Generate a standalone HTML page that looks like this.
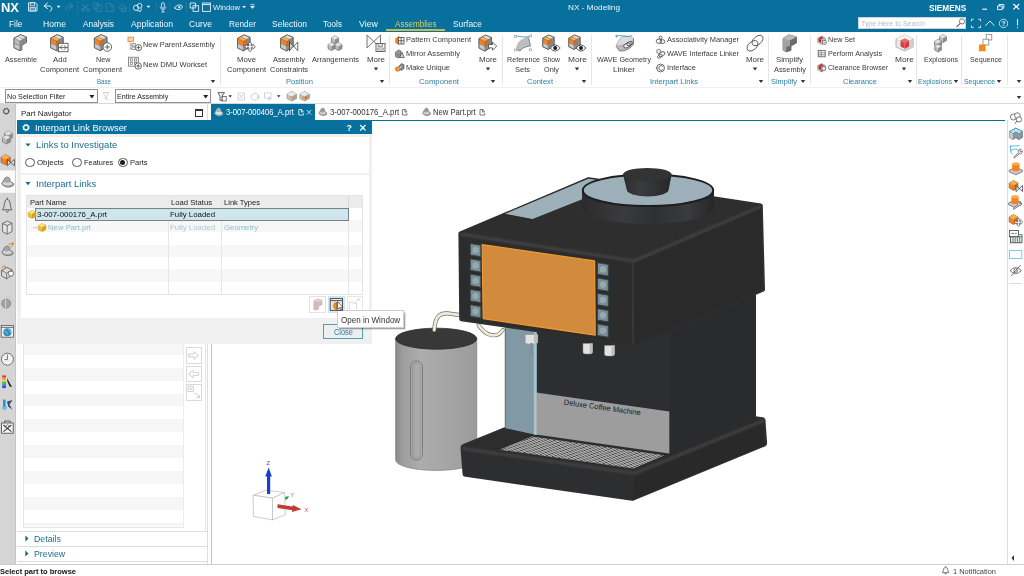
<!DOCTYPE html>
<html lang="en"><head><meta charset="utf-8"><title>NX - Modeling</title>
<style>
html,body{margin:0;padding:0;}
body{width:1024px;height:576px;overflow:hidden;position:relative;background:#fff;font-family:"Liberation Sans", sans-serif;}
.b{position:absolute;}
.t{position:absolute;white-space:nowrap;line-height:1;transform-origin:0 50%;}
svg{position:absolute;left:0;top:0;overflow:visible;}
</style></head><body>
<div class="b" style="left:0px;top:0px;width:1024px;height:32px;background:#08709d;"></div>
<div class="b" style="left:0px;top:87px;width:1024px;height:1px;background:#f0f0f0;"></div>
<div class="b" style="left:0px;top:103px;width:1024px;height:1px;background:#d9d9d9;"></div>
<div class="b" style="left:386px;top:29px;width:59px;height:2px;background:#c9bb52;"></div>
<div class="b" style="left:858px;top:17px;width:108px;height:12px;background:#fff;border:1px solid #c9d6dd;box-sizing:border-box;"></div>
<div class="b" style="left:220px;top:35px;width:1px;height:50px;background:#e6e6e6;"></div>
<div class="b" style="left:389px;top:35px;width:1px;height:50px;background:#e6e6e6;"></div>
<div class="b" style="left:502px;top:35px;width:1px;height:50px;background:#e6e6e6;"></div>
<div class="b" style="left:591px;top:35px;width:1px;height:50px;background:#e6e6e6;"></div>
<div class="b" style="left:768px;top:35px;width:1px;height:50px;background:#e6e6e6;"></div>
<div class="b" style="left:810px;top:35px;width:1px;height:50px;background:#e6e6e6;"></div>
<div class="b" style="left:916px;top:35px;width:1px;height:50px;background:#e6e6e6;"></div>
<div class="b" style="left:961px;top:35px;width:1px;height:50px;background:#e6e6e6;"></div>
<div class="b" style="left:1006.5px;top:35px;width:1px;height:50px;background:#e6e6e6;"></div>
<div class="b" style="left:5px;top:89px;width:92.5px;height:13.5px;background:#fff;border:1px solid #8f8f8f;box-sizing:border-box;"></div>
<div class="b" style="left:115.4px;top:89px;width:96px;height:13.5px;background:#fff;border:1px solid #8f8f8f;box-sizing:border-box;"></div>
<div class="b" style="left:0px;top:104px;width:15.2px;height:461px;background:#d5d5d5;"></div>
<div class="b" style="left:15.2px;top:104px;width:0.8px;height:461px;background:#c6c6c6;"></div>
<div class="b" style="left:18px;top:104px;width:190px;height:461px;background:#fff;"></div>
<div class="b" style="left:207.4px;top:104px;width:1px;height:461px;background:#dedede;"></div>
<div class="b" style="left:211px;top:120px;width:1px;height:445px;background:#c4c4c4;"></div>
<div class="b" style="left:195px;top:109px;width:8px;height:8px;border:1px solid #333;box-sizing:border-box;border-top-width:2px;"></div>
<div class="b" style="left:211.3px;top:104.3px;width:104.2px;height:16px;background:#08709d;"></div>
<div class="b" style="left:211.3px;top:119.6px;width:794px;height:1.2px;background:#08709d;"></div>
<div class="b" style="left:22.6px;top:343px;width:1px;height:185px;background:#e6e6e6;"></div>
<div class="b" style="left:183.2px;top:343px;width:1px;height:185px;background:#ececec;"></div>
<div class="b" style="left:23.6px;top:341.9px;width:159.6px;height:12.9px;background:#f6f6f6;"></div>
<div class="b" style="left:23.6px;top:367.7px;width:159.6px;height:12.9px;background:#f6f6f6;"></div>
<div class="b" style="left:23.6px;top:393.5px;width:159.6px;height:12.9px;background:#f6f6f6;"></div>
<div class="b" style="left:23.6px;top:419.3px;width:159.6px;height:12.9px;background:#f6f6f6;"></div>
<div class="b" style="left:23.6px;top:445.1px;width:159.6px;height:12.9px;background:#f6f6f6;"></div>
<div class="b" style="left:23.6px;top:470.90000000000003px;width:159.6px;height:12.9px;background:#f6f6f6;"></div>
<div class="b" style="left:23.6px;top:496.70000000000005px;width:159.6px;height:12.9px;background:#f6f6f6;"></div>
<div class="b" style="left:23.6px;top:522.5px;width:159.6px;height:3.8999999999999773px;background:#f6f6f6;"></div>
<div class="b" style="left:22.6px;top:527px;width:161.6px;height:1px;background:#e6e6e6;"></div>
<div class="b" style="left:185.6px;top:347px;width:16px;height:16.8px;background:#fff;border:1px solid #dadada;box-sizing:border-box;"></div>
<div class="b" style="left:185.6px;top:365.6px;width:16px;height:16.8px;background:#fff;border:1px solid #dadada;box-sizing:border-box;"></div>
<div class="b" style="left:185.6px;top:383.8px;width:16px;height:16.8px;background:#fff;border:1px solid #dadada;box-sizing:border-box;"></div>
<div class="b" style="left:205.4px;top:343px;width:1px;height:188px;background:#e6e6e6;"></div>
<div class="b" style="left:17.4px;top:530.6px;width:190px;height:1px;background:#dcdcdc;"></div>
<div class="b" style="left:17.4px;top:545.6px;width:190px;height:1px;background:#dcdcdc;"></div>
<div class="b" style="left:17.4px;top:560.6px;width:190px;height:1px;background:#dcdcdc;"></div>
<div class="b" style="left:0px;top:564.4px;width:1024px;height:1px;background:#cfcfcf;"></div>
<div class="b" style="left:0px;top:565.4px;width:1024px;height:11px;background:#fff;"></div>
<div class="b" style="left:1006.6px;top:120px;width:1px;height:445px;background:#dcdcdc;"></div>
<div class="b" style="left:1009px;top:283px;width:13px;height:1px;background:#dddddd;"></div>
<div class="b" style="left:17.4px;top:120px;width:354.20000000000005px;height:224.4px;background:#f0f0f0;"></div>
<div class="b" style="left:17.4px;top:120px;width:354.20000000000005px;height:14.4px;background:#08709d;"></div>
<div class="b" style="left:20.6px;top:136.5px;width:348.6px;height:36.2px;background:#fff;"></div>
<div class="b" style="left:20.6px;top:174.8px;width:348.6px;height:143.4px;background:#fff;"></div>
<div class="b" style="left:25.099999999999998px;top:157.5px;width:9.6px;height:9.6px;background:#fff;border:1px solid #555;box-sizing:border-box;border-radius:50%;"></div>
<div class="b" style="left:72.0px;top:157.5px;width:9.6px;height:9.6px;background:#fff;border:1px solid #555;box-sizing:border-box;border-radius:50%;"></div>
<div class="b" style="left:118.0px;top:157.5px;width:9.6px;height:9.6px;background:#fff;border:1px solid #555;box-sizing:border-box;border-radius:50%;"></div>
<div class="b" style="left:120.2px;top:159.7px;width:5.2px;height:5.2px;background:#1e1e1e;border-radius:50%;"></div>
<div class="b" style="left:26px;top:194.8px;width:337.2px;height:100.4px;background:#fff;border:1px solid #e4e4e4;box-sizing:border-box;"></div>
<div class="b" style="left:27px;top:195.8px;width:335.2px;height:12px;background:#ececec;"></div>
<div class="b" style="left:27px;top:220.10000000000002px;width:335.2px;height:12.3px;background:#f7f7f7;"></div>
<div class="b" style="left:27px;top:244.70000000000002px;width:335.2px;height:12.3px;background:#f7f7f7;"></div>
<div class="b" style="left:27px;top:269.3px;width:335.2px;height:12.3px;background:#f7f7f7;"></div>
<div class="b" style="left:167.6px;top:195.8px;width:1px;height:98px;background:#e6e6e6;"></div>
<div class="b" style="left:220.6px;top:195.8px;width:1px;height:98px;background:#e6e6e6;"></div>
<div class="b" style="left:348.2px;top:195.8px;width:1px;height:98px;background:#e6e6e6;"></div>
<div class="b" style="left:348.2px;top:195.8px;width:1px;height:12px;background:#d8d8d8;"></div>
<div class="b" style="left:35.4px;top:207.8px;width:313.4px;height:13.2px;background:#cfe5ee;border:1px solid #75847c;box-sizing:border-box;"></div>
<div class="b" style="left:309.4px;top:296px;width:17px;height:16.6px;background:#fff;border:1px solid #e2e2e2;box-sizing:border-box;"></div>
<div class="b" style="left:328px;top:296px;width:16.6px;height:16.6px;background:#d6edf1;border:1px solid #cfe6ec;box-sizing:border-box;"></div>
<div class="b" style="left:346.9px;top:296px;width:16px;height:16.6px;background:#fff;border:1px solid #e6e6e6;box-sizing:border-box;"></div>
<div class="b" style="left:323.4px;top:324.4px;width:39.4px;height:14.4px;background:#efefef;border:1px solid #4f9fc0;box-sizing:border-box;"></div>
<div class="b" style="left:337px;top:310px;width:67.4px;height:18.4px;background:#fff;border:1px solid #cfcfcf;box-sizing:border-box;box-shadow:1.5px 1.5px 1.5px rgba(0,0,0,.35);"></div>
<svg width="1024" height="576"><path d="M210.8,79.9 L215.2,79.9 L213,82.98 Z" fill="#333"/></svg>
<svg width="1024" height="576"><path d="M379.8,79.9 L384.2,79.9 L382,82.98 Z" fill="#333"/></svg>
<svg width="1024" height="576"><path d="M490.8,79.9 L495.2,79.9 L493,82.98 Z" fill="#333"/></svg>
<svg width="1024" height="576"><path d="M581.8,79.9 L586.2,79.9 L584,82.98 Z" fill="#333"/></svg>
<svg width="1024" height="576"><path d="M758.8,79.9 L763.2,79.9 L761,82.98 Z" fill="#333"/></svg>
<svg width="1024" height="576"><path d="M800.8,79.9 L805.2,79.9 L803,82.98 Z" fill="#333"/></svg>
<svg width="1024" height="576"><path d="M907.8,79.9 L912.2,79.9 L910,82.98 Z" fill="#333"/></svg>
<svg width="1024" height="576"><path d="M953.8,79.9 L958.2,79.9 L956,82.98 Z" fill="#333"/></svg>
<svg width="1024" height="576"><path d="M996.8,79.9 L1001.2,79.9 L999,82.98 Z" fill="#333"/></svg>
<svg width="1024" height="576"><path d="M1016.8,79.9 L1021.2,79.9 L1019,82.98 Z" fill="#333"/></svg>
<svg width="1024" height="576"><path d="M373.8,67.4 L378.2,67.4 L376,70.48 Z" fill="#333"/></svg>
<svg width="1024" height="576"><path d="M485.8,67.4 L490.2,67.4 L488,70.48 Z" fill="#333"/></svg>
<svg width="1024" height="576"><path d="M574.8,67.4 L579.2,67.4 L577,70.48 Z" fill="#333"/></svg>
<svg width="1024" height="576"><path d="M752.8,67.4 L757.2,67.4 L755,70.48 Z" fill="#333"/></svg>
<svg width="1024" height="576"><path d="M901.8,67.4 L906.2,67.4 L904,70.48 Z" fill="#333"/></svg>
<svg width="1024" height="576"><path d="M1016.8,95.9 L1021.2,95.9 L1019,98.98 Z" fill="#333"/></svg>
<svg width="1024" height="576"><path d="M89.4,94.95 L94.4,94.95 L91.9,98.45 Z" fill="#222"/></svg>
<svg width="1024" height="576"><path d="M203.2,94.95 L208.2,94.95 L205.7,98.45 Z" fill="#222"/></svg>
<svg width="1024" height="576"><g fill="none" stroke="#c4c4c4" stroke-width="0.8" stroke-linejoin="round"><path d="M188.6,354 H194 V351.6 L198.6,355.4 L194,359.2 V356.8 H188.6 Z"/><path d="M198.6,372.6 H193.2 V370.2 L188.6,374 L193.2,377.8 V375.4 H198.6 Z"/><rect x="188" y="386.2" width="5.4" height="5.4"/><path d="M189.4,388.9 H192 M190.7,387.6 V390.2 M194.4,392.6 L199.4,397.6 M199.4,394.6 V397.6 H196.4"/></g></svg>
<svg width="1024" height="576"><path d="M25.3,535.6 L28.6,538.6 L25.3,541.6 Z M25.3,550.6 L28.6,553.6 L25.3,556.6 Z" fill="#1f6d92"/></svg>
<svg width="1024" height="576"><path d="M1014,555 L1011.5,558 L1014,561 Z" fill="#333"/></svg>
<svg width="1024" height="576"><path d="M942.4,572.6 C943.8,571 943,567.6 945.6,567 C948.2,567.6 947.4,571 948.8,572.6 Z M944.6,573.2 C944.8,574.4 946.4,574.4 946.6,573.2 M945.6,566.2 V567" fill="none" stroke="#444" stroke-width="0.7" stroke-linejoin="round"/></svg>
<svg width="1024" height="576"><path d="M25.3,143.4 L30.7,143.4 L28,146.6 Z M25.3,182 L30.7,182 L28,185.2 Z" fill="#1f6d92"/><circle cx="26" cy="127.6" r="2.4" fill="none" stroke="#fff" stroke-width="1.3"/><circle cx="26" cy="127.6" r="3.3" fill="none" stroke="#fff" stroke-width="0.9" stroke-dasharray="1.1 1.49"/><path d="M360.2,125 L365.5,130.5 M365.5,125 L360.2,130.5" stroke="#fff" stroke-width="1.1"/></svg>
<svg width="1024" height="576" viewBox="0 0 1024 576"><polygon points="14.00,38.20 20.50,34.70 26.50,37.20 26.50,46.20 20.00,50.70 14.00,47.70" fill="#bdbdbd" stroke="#5a5a5a" stroke-width="0.8" stroke-linejoin="round"/><polygon points="14.00,38.20 20.50,34.70 26.50,37.20 20.00,41.20" fill="#e2e2e2"/><polygon points="20.00,41.20 26.50,37.20 26.50,46.20 20.00,50.70" fill="#8e8e8e"/><polygon points="14.00,38.20 20.00,41.20 20.00,50.70 14.00,47.70" fill="#c9c9c9"/><polygon points="14.00,38.20 17.40,36.40 23.40,39.20 20.00,41.20" fill="#e2e2e2"/><polygon points="14.00,38.20 20.00,41.20 20.00,46.00 14.00,43.10" fill="#bdbdbd"/><polygon points="20.00,41.20 23.40,39.20 23.40,43.90 20.00,46.00" fill="#8e8e8e"/><polyline points="14.00,38.20 20.00,41.20 26.50,37.20" fill="none" stroke="#5f5f5f" stroke-width="0.5" stroke-linejoin="round"/><polyline points="20.00,41.20 20.00,50.70" fill="none" stroke="#5f5f5f" stroke-width="0.5" stroke-linejoin="round"/><polyline points="14.00,43.10 20.00,46.00 26.50,41.80" fill="none" stroke="#777" stroke-width="0.45" stroke-linejoin="round"/><polyline points="17.40,36.40 23.40,39.20 23.40,48.30" fill="none" stroke="#777" stroke-width="0.45" stroke-linejoin="round"/><polyline points="14.00,38.20 20.50,34.70 26.50,37.20 26.50,46.20 20.00,50.70 14.00,47.70 14.00,38.20" fill="none" stroke="#5a5a5a" stroke-width="0.8" stroke-linejoin="round"/><polygon points="22,45.5 27.2,42.3 27.2,47.5 22,51.2" fill="#fff"/><path d="M22,45.3 L26.6,42.5 M22,45.3 L22,50.3" stroke="#6f6f6f" stroke-width="0.7"/><path d="M14,42.9 L20,45.9 L26.5,42" stroke="#8a8a8a" stroke-width="0.5" fill="none"/><polygon points="50.60,38.20 57.10,34.70 63.10,37.20 63.10,46.20 56.60,50.70 50.60,47.70" fill="#bdbdbd" stroke="#5a5a5a" stroke-width="0.8" stroke-linejoin="round"/><polygon points="50.60,38.20 57.10,34.70 63.10,37.20 56.60,41.20" fill="#e2e2e2"/><polygon points="56.60,41.20 63.10,37.20 63.10,46.20 56.60,50.70" fill="#8e8e8e"/><polygon points="50.60,38.20 56.60,41.20 56.60,50.70 50.60,47.70" fill="#c9c9c9"/><polygon points="50.60,38.20 54.00,36.40 60.00,39.20 56.60,41.20" fill="#fbad52"/><polygon points="50.60,38.20 56.60,41.20 56.60,46.00 50.60,43.10" fill="#f58220"/><polygon points="56.60,41.20 60.00,39.20 60.00,43.90 56.60,46.00" fill="#df6f12"/><polyline points="50.60,38.20 56.60,41.20 63.10,37.20" fill="none" stroke="#5f5f5f" stroke-width="0.5" stroke-linejoin="round"/><polyline points="56.60,41.20 56.60,50.70" fill="none" stroke="#5f5f5f" stroke-width="0.5" stroke-linejoin="round"/><polyline points="50.60,43.10 56.60,46.00 63.10,41.80" fill="none" stroke="#777" stroke-width="0.45" stroke-linejoin="round"/><polyline points="54.00,36.40 60.00,39.20 60.00,48.30" fill="none" stroke="#777" stroke-width="0.45" stroke-linejoin="round"/><polyline points="50.60,38.20 57.10,34.70 63.10,37.20 63.10,46.20 56.60,50.70 50.60,47.70 50.60,38.20" fill="none" stroke="#5a5a5a" stroke-width="0.8" stroke-linejoin="round"/><rect x="58.4" y="43.3" width="9.6" height="8.4" fill="#fff" stroke="#555" stroke-width="0.9"/><path d="M58.4,47.5 H68 M62.5,45.2 L60,47.5 L62.5,49.8 M63.8,45.2 L66.3,47.5 L63.8,49.8" stroke="#555" stroke-width="0.8" fill="none"/><polygon points="94.40,38.20 100.90,34.70 106.90,37.20 106.90,46.20 100.40,50.70 94.40,47.70" fill="#bdbdbd" stroke="#5a5a5a" stroke-width="0.8" stroke-linejoin="round"/><polygon points="94.40,38.20 100.90,34.70 106.90,37.20 100.40,41.20" fill="#e2e2e2"/><polygon points="100.40,41.20 106.90,37.20 106.90,46.20 100.40,50.70" fill="#8e8e8e"/><polygon points="94.40,38.20 100.40,41.20 100.40,50.70 94.40,47.70" fill="#c9c9c9"/><polygon points="94.40,38.20 97.80,36.40 103.80,39.20 100.40,41.20" fill="#fbad52"/><polygon points="94.40,38.20 100.40,41.20 100.40,46.00 94.40,43.10" fill="#f58220"/><polygon points="100.40,41.20 103.80,39.20 103.80,43.90 100.40,46.00" fill="#df6f12"/><polyline points="94.40,38.20 100.40,41.20 106.90,37.20" fill="none" stroke="#5f5f5f" stroke-width="0.5" stroke-linejoin="round"/><polyline points="100.40,41.20 100.40,50.70" fill="none" stroke="#5f5f5f" stroke-width="0.5" stroke-linejoin="round"/><polyline points="94.40,43.10 100.40,46.00 106.90,41.80" fill="none" stroke="#777" stroke-width="0.45" stroke-linejoin="round"/><polyline points="97.80,36.40 103.80,39.20 103.80,48.30" fill="none" stroke="#777" stroke-width="0.45" stroke-linejoin="round"/><polyline points="94.40,38.20 100.90,34.70 106.90,37.20 106.90,46.20 100.40,50.70 94.40,47.70 94.40,38.20" fill="none" stroke="#5a5a5a" stroke-width="0.8" stroke-linejoin="round"/><circle cx="107.3" cy="47" r="4.3" fill="#fff" stroke="#444" stroke-width="0.8"/><path d="M104.72,47 H109.88 M107.3,44.42 V49.58" stroke="#444" stroke-width="0.8" fill="none"/><rect x="128" y="37.2" width="5.5" height="4.2" fill="#fbd3b0" stroke="#ee8a3c" stroke-width="0.9"/><path d="M130.2,41.5 V50 M130.2,45 H134 M130.2,48.5 H134" stroke="#9a9a9a" stroke-width="0.7" fill="none"/><rect x="132" y="43.4" width="3.2" height="2.6" fill="#fff" stroke="#555" stroke-width="0.6"/><rect x="132" y="47" width="3.2" height="2.6" fill="#fff" stroke="#555" stroke-width="0.6"/><circle cx="138.5" cy="47.6" r="3.1" fill="#fff" stroke="#444" stroke-width="0.8"/><path d="M136.64,47.6 H140.36 M138.5,45.74 V49.46" stroke="#444" stroke-width="0.8" fill="none"/><rect x="128.5" y="57.2" width="10" height="9" fill="#f6f6f6" stroke="#777" stroke-width="0.8"/><rect x="130.2" y="58.8" width="2.4" height="2.2" fill="#fff" stroke="#666" stroke-width="0.6"/><rect x="134.4" y="58.8" width="2.4" height="2.2" fill="#fff" stroke="#666" stroke-width="0.6"/><rect x="130.2" y="62.4" width="2.4" height="2.2" fill="#fff" stroke="#666" stroke-width="0.6"/><rect x="134.4" y="62.4" width="2.4" height="2.2" fill="#fff" stroke="#666" stroke-width="0.6"/><circle cx="138.2" cy="66" r="3.2" fill="#fff" stroke="#444" stroke-width="0.8"/><path d="M136.28,66 H140.12 M138.2,64.08 V67.92" stroke="#444" stroke-width="0.8" fill="none"/><polygon points="237.50,38.40 244.00,34.90 250.00,37.40 250.00,46.40 243.50,50.90 237.50,47.90" fill="#bdbdbd" stroke="#5a5a5a" stroke-width="0.8" stroke-linejoin="round"/><polygon points="237.50,38.40 244.00,34.90 250.00,37.40 243.50,41.40" fill="#e2e2e2"/><polygon points="243.50,41.40 250.00,37.40 250.00,46.40 243.50,50.90" fill="#8e8e8e"/><polygon points="237.50,38.40 243.50,41.40 243.50,50.90 237.50,47.90" fill="#c9c9c9"/><polygon points="237.50,38.40 240.90,36.60 246.90,39.40 243.50,41.40" fill="#fbad52"/><polygon points="237.50,38.40 243.50,41.40 243.50,46.20 237.50,43.30" fill="#f58220"/><polygon points="243.50,41.40 246.90,39.40 246.90,44.10 243.50,46.20" fill="#df6f12"/><polyline points="237.50,38.40 243.50,41.40 250.00,37.40" fill="none" stroke="#5f5f5f" stroke-width="0.5" stroke-linejoin="round"/><polyline points="243.50,41.40 243.50,50.90" fill="none" stroke="#5f5f5f" stroke-width="0.5" stroke-linejoin="round"/><polyline points="237.50,43.30 243.50,46.20 250.00,42.00" fill="none" stroke="#777" stroke-width="0.45" stroke-linejoin="round"/><polyline points="240.90,36.60 246.90,39.40 246.90,48.50" fill="none" stroke="#777" stroke-width="0.45" stroke-linejoin="round"/><polyline points="237.50,38.40 244.00,34.90 250.00,37.40 250.00,46.40 243.50,50.90 237.50,47.90 237.50,38.40" fill="none" stroke="#5a5a5a" stroke-width="0.8" stroke-linejoin="round"/><path d="M250,41.8 L252.2,44.4 H251 V45.7 H253 V44.5 L255.4,46.7 L253,48.9 V47.7 H251 V49.2 H252.2 L250,51.8 L247.8,49.2 H249 V47.7 H247 V48.9 L244.6,46.7 L247,44.5 V45.7 H249 V44.4 H247.8 Z" fill="#fff" stroke="#444" stroke-width="0.7" stroke-linejoin="round"/><polygon points="280.60,38.40 287.10,34.90 293.10,37.40 293.10,46.40 286.60,50.90 280.60,47.90" fill="#bdbdbd" stroke="#5a5a5a" stroke-width="0.8" stroke-linejoin="round"/><polygon points="280.60,38.40 287.10,34.90 293.10,37.40 286.60,41.40" fill="#e2e2e2"/><polygon points="286.60,41.40 293.10,37.40 293.10,46.40 286.60,50.90" fill="#8e8e8e"/><polygon points="280.60,38.40 286.60,41.40 286.60,50.90 280.60,47.90" fill="#c9c9c9"/><polygon points="280.60,38.40 284.00,36.60 290.00,39.40 286.60,41.40" fill="#fbad52"/><polygon points="280.60,38.40 286.60,41.40 286.60,46.20 280.60,43.30" fill="#f58220"/><polygon points="286.60,41.40 290.00,39.40 290.00,44.10 286.60,46.20" fill="#df6f12"/><polyline points="280.60,38.40 286.60,41.40 293.10,37.40" fill="none" stroke="#5f5f5f" stroke-width="0.5" stroke-linejoin="round"/><polyline points="286.60,41.40 286.60,50.90" fill="none" stroke="#5f5f5f" stroke-width="0.5" stroke-linejoin="round"/><polyline points="280.60,43.30 286.60,46.20 293.10,42.00" fill="none" stroke="#777" stroke-width="0.45" stroke-linejoin="round"/><polyline points="284.00,36.60 290.00,39.40 290.00,48.50" fill="none" stroke="#777" stroke-width="0.45" stroke-linejoin="round"/><polyline points="280.60,38.40 287.10,34.90 293.10,37.40 293.10,46.40 286.60,50.90 280.60,47.90 280.60,38.40" fill="none" stroke="#5a5a5a" stroke-width="0.8" stroke-linejoin="round"/><path d="M289.5,42 L297.8,50.6 L297.8,42 L289.5,50.6 Z" fill="#f4f4f4" fill-opacity="0.6" stroke="#444" stroke-width="0.8" stroke-linejoin="round"/><path d="M289.5,41 V51.5" stroke="#444" stroke-width="0.8"/><polygon points="331.5,37.8 335.0,35.8 338.5,37.8 338.5,41.8 335.0,43.8 331.5,41.8" fill="#bdbdbd" stroke="#676767" stroke-width="0.7" stroke-linejoin="round"/><polygon points="331.5,37.8 335.0,35.8 338.5,37.8 335.0,39.8" fill="#e2e2e2"/><polygon points="335.0,39.8 338.5,37.8 338.5,41.8 335.0,43.8" fill="#8e8e8e"/><polygon points="328,44.6 331.5,42.6 335.0,44.6 335.0,48.6 331.5,50.6 328,48.6" fill="#bdbdbd" stroke="#676767" stroke-width="0.7" stroke-linejoin="round"/><polygon points="328,44.6 331.5,42.6 335.0,44.6 331.5,46.6" fill="#e2e2e2"/><polygon points="331.5,46.6 335.0,44.6 335.0,48.6 331.5,50.6" fill="#8e8e8e"/><polygon points="335,44.6 338.5,42.6 342.0,44.6 342.0,48.6 338.5,50.6 335,48.6" fill="#bdbdbd" stroke="#676767" stroke-width="0.7" stroke-linejoin="round"/><polygon points="335,44.6 338.5,42.6 342.0,44.6 338.5,46.6" fill="#e2e2e2"/><polygon points="338.5,46.6 342.0,44.6 342.0,48.6 338.5,50.6" fill="#8e8e8e"/><path d="M367,35 L380.5,48 L380.5,35 L367,48 Z" fill="#f4f4f4" fill-opacity="0.6" stroke="#666" stroke-width="0.9" stroke-linejoin="round"/><rect x="376" y="43.5" width="9" height="8" fill="#fff" stroke="#555" stroke-width="0.9"/><rect x="378" y="43.7" width="4.6" height="2.6" fill="#ddd" stroke="#555" stroke-width="0.6"/><rect x="377.8" y="48" width="5.4" height="2" fill="#fff" stroke="#555" stroke-width="0.6"/><polygon points="479.00,38.60 485.50,35.10 491.50,37.60 491.50,46.60 485.00,51.10 479.00,48.10" fill="#bdbdbd" stroke="#5a5a5a" stroke-width="0.8" stroke-linejoin="round"/><polygon points="479.00,38.60 485.50,35.10 491.50,37.60 485.00,41.60" fill="#e2e2e2"/><polygon points="485.00,41.60 491.50,37.60 491.50,46.60 485.00,51.10" fill="#8e8e8e"/><polygon points="479.00,38.60 485.00,41.60 485.00,51.10 479.00,48.10" fill="#c9c9c9"/><polygon points="479.00,38.60 482.40,36.80 488.40,39.60 485.00,41.60" fill="#fbad52"/><polygon points="479.00,38.60 485.00,41.60 485.00,46.40 479.00,43.50" fill="#f58220"/><polygon points="485.00,41.60 488.40,39.60 488.40,44.30 485.00,46.40" fill="#df6f12"/><polyline points="479.00,38.60 485.00,41.60 491.50,37.60" fill="none" stroke="#5f5f5f" stroke-width="0.5" stroke-linejoin="round"/><polyline points="485.00,41.60 485.00,51.10" fill="none" stroke="#5f5f5f" stroke-width="0.5" stroke-linejoin="round"/><polyline points="479.00,43.50 485.00,46.40 491.50,42.20" fill="none" stroke="#777" stroke-width="0.45" stroke-linejoin="round"/><polyline points="482.40,36.80 488.40,39.60 488.40,48.70" fill="none" stroke="#777" stroke-width="0.45" stroke-linejoin="round"/><polyline points="479.00,38.60 485.50,35.10 491.50,37.60 491.50,46.60 485.00,51.10 479.00,48.10 479.00,38.60" fill="none" stroke="#5a5a5a" stroke-width="0.8" stroke-linejoin="round"/><path d="M488.5,44.5 H492.5 V42.2 L496.8,46.2 L492.5,50.2 V47.9 H488.5 Z" fill="#fff" stroke="#444" stroke-width="0.8" stroke-linejoin="round"/><path d="M516.5,49.5 C517,43 521,38.5 528.5,37.5 L530.5,46 C525,46.5 521.5,48.5 520,51 Z" fill="#bdbdbd" stroke="#6a6a6a" stroke-width="0.8" stroke-linejoin="round"/><path d="M516.5,49.5 C517,43 521,38.5 528.5,37.5" fill="none" stroke="#e8e8e8" stroke-width="0.8"/><path d="M514.5,37 C519,34 524,40 531.5,35" fill="none" stroke="#3aa0d0" stroke-width="0.9"/><rect x="514.2" y="35.4" width="2" height="2" fill="#fff" stroke="#888" stroke-width="0.5"/><rect x="529.8" y="35" width="2" height="2" fill="#fff" stroke="#888" stroke-width="0.5"/><rect x="514.6" y="49" width="2" height="2" fill="#fff" stroke="#888" stroke-width="0.5"/><rect x="529.6" y="48.8" width="2" height="2" fill="#fff" stroke="#888" stroke-width="0.5"/><polygon points="542.80,38.20 548.65,35.05 554.05,37.30 554.05,45.40 548.20,49.45 542.80,46.75" fill="#bdbdbd" stroke="#5a5a5a" stroke-width="0.8" stroke-linejoin="round"/><polygon points="542.80,38.20 548.65,35.05 554.05,37.30 548.20,40.90" fill="#e2e2e2"/><polygon points="548.20,40.90 554.05,37.30 554.05,45.40 548.20,49.45" fill="#8e8e8e"/><polygon points="542.80,38.20 548.20,40.90 548.20,49.45 542.80,46.75" fill="#c9c9c9"/><polygon points="542.80,38.20 545.86,36.58 551.26,39.10 548.20,40.90" fill="#fbad52"/><polygon points="542.80,38.20 548.20,40.90 548.20,45.22 542.80,42.61" fill="#f58220"/><polygon points="548.20,40.90 551.26,39.10 551.26,43.33 548.20,45.22" fill="#df6f12"/><polyline points="542.80,38.20 548.20,40.90 554.05,37.30" fill="none" stroke="#5f5f5f" stroke-width="0.5" stroke-linejoin="round"/><polyline points="548.20,40.90 548.20,49.45" fill="none" stroke="#5f5f5f" stroke-width="0.5" stroke-linejoin="round"/><polyline points="542.80,42.61 548.20,45.22 554.05,41.44" fill="none" stroke="#777" stroke-width="0.45" stroke-linejoin="round"/><polyline points="545.86,36.58 551.26,39.10 551.26,47.29" fill="none" stroke="#777" stroke-width="0.45" stroke-linejoin="round"/><polyline points="542.80,38.20 548.65,35.05 554.05,37.30 554.05,45.40 548.20,49.45 542.80,46.75 542.80,38.20" fill="none" stroke="#5a5a5a" stroke-width="0.8" stroke-linejoin="round"/><path d="M550.2,48 Q555.2,41.8 560.2,48 Q555.2,54.2 550.2,48 Z" fill="#fff" stroke="#333" stroke-width="0.8"/><circle cx="555.2" cy="48" r="2.05" fill="#222"/><polygon points="568.80,38.20 574.65,35.05 580.05,37.30 580.05,45.40 574.20,49.45 568.80,46.75" fill="#bdbdbd" stroke="#5a5a5a" stroke-width="0.8" stroke-linejoin="round"/><polygon points="568.80,38.20 574.65,35.05 580.05,37.30 574.20,40.90" fill="#e2e2e2"/><polygon points="574.20,40.90 580.05,37.30 580.05,45.40 574.20,49.45" fill="#8e8e8e"/><polygon points="568.80,38.20 574.20,40.90 574.20,49.45 568.80,46.75" fill="#c9c9c9"/><polygon points="568.80,38.20 571.86,36.58 577.26,39.10 574.20,40.90" fill="#fbad52"/><polygon points="568.80,38.20 574.20,40.90 574.20,45.22 568.80,42.61" fill="#f58220"/><polygon points="574.20,40.90 577.26,39.10 577.26,43.33 574.20,45.22" fill="#df6f12"/><polyline points="568.80,38.20 574.20,40.90 580.05,37.30" fill="none" stroke="#5f5f5f" stroke-width="0.5" stroke-linejoin="round"/><polyline points="574.20,40.90 574.20,49.45" fill="none" stroke="#5f5f5f" stroke-width="0.5" stroke-linejoin="round"/><polyline points="568.80,42.61 574.20,45.22 580.05,41.44" fill="none" stroke="#777" stroke-width="0.45" stroke-linejoin="round"/><polyline points="571.86,36.58 577.26,39.10 577.26,47.29" fill="none" stroke="#777" stroke-width="0.45" stroke-linejoin="round"/><polyline points="568.80,38.20 574.65,35.05 580.05,37.30 580.05,45.40 574.20,49.45 568.80,46.75 568.80,38.20" fill="none" stroke="#5a5a5a" stroke-width="0.8" stroke-linejoin="round"/><path d="M576.0,48 Q581,41.8 586.0,48 Q581,54.2 576.0,48 Z" fill="#fff" stroke="#333" stroke-width="0.8"/><circle cx="581" cy="48" r="2.05" fill="#222"/><path d="M616,46 L621,37.5 C625,35.5 630,36 633.5,38.5 L633.5,44 C631,48.5 625,51.5 619.5,51 Z" fill="#b9b9b9" stroke="#666" stroke-width="0.8" stroke-linejoin="round"/><path d="M616,46 L621,37.5 C625,35.5 630,36 633.5,38.5 L628,44.5 C624,44 620,44.5 616,46 Z" fill="#dcdcdc"/><ellipse cx="627" cy="45.5" rx="3.6" ry="2.2" transform="rotate(-25 627 45.5)" fill="#eee" stroke="#444" stroke-width="0.8"/><ellipse cx="629.5" cy="43.6" rx="3" ry="1.9" transform="rotate(-25 629.5 43.6)" fill="none" stroke="#444" stroke-width="0.8"/><path d="M616,36.5 C621,33.5 626,38.5 632,35.5" fill="none" stroke="#3aa0d0" stroke-width="0.9"/><path d="M615,36.2 H618 M616.5,34.7 V37.7" stroke="#3aa0d0" stroke-width="0.7"/><ellipse cx="757.5" cy="40.5" rx="6.4" ry="4" transform="rotate(-42 757.5 40.5)" fill="#fff" stroke="#555" stroke-width="0.9"/><ellipse cx="752.5" cy="45.8" rx="6.4" ry="4" transform="rotate(-42 752.5 45.8)" fill="none" stroke="#555" stroke-width="0.9"/><polygon points="783,38.5 789,34.8 796.5,37 796.5,43 791,46 791,50.5 786,51.8 783,50" fill="#8a8a8a" stroke="#555" stroke-width="0.7" stroke-linejoin="round"/><polygon points="783,38.5 789,34.8 796.5,37 790,40.6" fill="#bcbcbc"/><polygon points="783,38.5 790,40.6 790,46 786.2,47 786.2,51.8 783,50" fill="#a3a3a3"/><polygon points="790,40.6 796.5,37 796.5,43 791,46 791,50.5 786.2,51.8 786.2,47 790,46" fill="#6c6c6c"/><polygon points="896,39 904.5,34.8 913.2,39 913.2,47 904.5,51 896,47" fill="#e9e9e9" stroke="#9a9a9a" stroke-width="0.7" stroke-linejoin="round"/><polygon points="896,39 904.5,34.8 913.2,39 904.5,43" fill="#f4f4f4"/><polygon points="904.5,43 913.2,39 913.2,47 904.5,51" fill="#cfcfcf"/><polygon points="900.5,40.5 904.8,38.5 909,40.5 909,46.5 904.8,48.8 900.5,46.5" fill="#e03a3a"/><polygon points="900.5,40.5 904.8,38.5 909,40.5 904.8,42.5" fill="#f26a6a"/><path d="M904.5,43 V51 M896,39 L904.5,43 L913.2,39" stroke="#bdbdbd" stroke-width="0.5" fill="none" opacity="0.8"/><polygon points="939.5,36.6 943.0,34.6 946.5,36.6 946.5,40.6 943.0,42.6 939.5,40.6" fill="#bdbdbd" stroke="#676767" stroke-width="0.7" stroke-linejoin="round"/><polygon points="939.5,36.6 943.0,34.6 946.5,36.6 943.0,38.6" fill="#e2e2e2"/><polygon points="943.0,38.6 946.5,36.6 946.5,40.6 943.0,42.6" fill="#8e8e8e"/><polygon points="934.5,41.4 938.0,39.4 941.5,41.4 941.5,45.4 938.0,47.4 934.5,45.4" fill="#bdbdbd" stroke="#676767" stroke-width="0.7" stroke-linejoin="round"/><polygon points="934.5,41.4 938.0,39.4 941.5,41.4 938.0,43.4" fill="#e2e2e2"/><polygon points="938.0,43.4 941.5,41.4 941.5,45.4 938.0,47.4" fill="#8e8e8e"/><polygon points="934.8,46.3 938.125,44.4 941.4499999999999,46.3 941.4499999999999,50.099999999999994 938.125,52.0 934.8,50.099999999999994" fill="#bdbdbd" stroke="#676767" stroke-width="0.7" stroke-linejoin="round"/><polygon points="934.8,46.3 938.125,44.4 941.4499999999999,46.3 938.125,48.199999999999996" fill="#e2e2e2"/><polygon points="938.125,48.199999999999996 941.4499999999999,46.3 941.4499999999999,50.099999999999994 938.125,52.0" fill="#8e8e8e"/><rect x="986.2" y="34.4" width="5.6" height="5.6" fill="#fff" stroke="#777" stroke-width="0.7"/><rect x="983" y="39.2" width="5.8" height="5.8" fill="#fff" stroke="#777" stroke-width="0.7"/><rect x="979" y="44.5" width="6.6" height="6.8" fill="#f28a1e"/></svg>
<svg width="1024" height="576" viewBox="0 0 1024 576"><path d="M28.5,2.8 H35.5 L37,4.3 V11 H28.5 Z" fill="none" stroke="#e6f0f5" stroke-width="0.9" stroke-linejoin="round"/><rect x="30.3" y="2.8" width="4.4" height="3" fill="none" stroke="#e6f0f5" stroke-width="0.8"/><rect x="30" y="7.6" width="5.4" height="3.4" fill="#5da3c2" stroke="#e6f0f5" stroke-width="0.7"/><path d="M47.5,3 L44,6 L47.5,8.6 M44.3,6 H49 C52.5,6 52.8,10.2 50,11.2" fill="none" stroke="#e6f0f5" stroke-width="1" stroke-linecap="round" stroke-linejoin="round"/><path d="M56.6,5.8 H60.6 L58.6,8 Z" fill="#e6f0f5"/><path d="M69.5,3 L73,6 L69.5,8.6 M72.7,6 H68.5 C65.3,6 65,10.2 67.5,11.2" fill="none" stroke="#3f87a8" stroke-width="1" stroke-linecap="round" stroke-linejoin="round"/><path d="M77.6,2 V12.5" stroke="#2f7a9d" stroke-width="0.7"/><path d="M129.7,2 V12.5" stroke="#2f7a9d" stroke-width="0.7"/><path d="M156,2 V12.5" stroke="#2f7a9d" stroke-width="0.7"/><path d="M170,2 V12.5" stroke="#2f7a9d" stroke-width="0.7"/><path d="M186.5,2 V12.5" stroke="#2f7a9d" stroke-width="0.7"/><path d="M82,9.5 L88.5,4.5 M82,4.5 L88.5,9.5" stroke="#3f87a8" stroke-width="0.9" fill="none"/><circle cx="83" cy="9.8" r="1.4" fill="none" stroke="#3f87a8" stroke-width="0.8"/><circle cx="87.6" cy="9.8" r="1.4" fill="none" stroke="#3f87a8" stroke-width="0.8"/><path d="M93.6,3 H98 V9 H93.6 Z M96,5 H101.3 V11.4 H96 Z" fill="none" stroke="#3f87a8" stroke-width="0.8"/><path d="M106.3,3.6 H110.5 L113.8,6.5 V11.4 H106.3 Z M110.5,3.6 V6.5 H113.8" fill="none" stroke="#3f87a8" stroke-width="0.8"/><path d="M118.5,7.5 L122.5,4 L126.5,7.5 L122.5,11 Z M121.5,8 H126 V11.5 H121.5 Z" fill="none" stroke="#3f87a8" stroke-width="0.8"/><circle cx="136" cy="7.8" r="2.6" fill="none" stroke="#e6f0f5" stroke-width="0.9"/><circle cx="139.6" cy="5.8" r="2.4" fill="none" stroke="#e6f0f5" stroke-width="0.9"/><path d="M137,10.5 L140.5,11.5 L141.5,8.5" fill="none" stroke="#e6f0f5" stroke-width="0.9"/><path d="M146.4,5.8 H150.4 L148.4,8 Z" fill="#e6f0f5"/><rect x="161.6" y="2.6" width="2.8" height="5.6" rx="1.4" fill="none" stroke="#e6f0f5" stroke-width="0.8"/><path d="M160.2,6.6 C160.2,10.4 165.8,10.4 165.8,6.6 M163,9.6 V12 M161.3,12 H164.7" fill="none" stroke="#e6f0f5" stroke-width="0.8"/><path d="M174,7.8 L178,5 H181.2 L182.5,6.8 L180.5,9.4 H177 Z" fill="none" stroke="#e6f0f5" stroke-width="0.9" stroke-linejoin="round"/><circle cx="179.3" cy="7.2" r="1.1" fill="#e6f0f5"/><path d="M190.2,3 H195.6 V8 H190.2 Z M193,5.6 H198.6 V11.4 H193 Z" fill="none" stroke="#e6f0f5" stroke-width="0.9"/><rect x="202.6" y="3" width="7.8" height="8.4" fill="none" stroke="#e6f0f5" stroke-width="0.9"/><path d="M202.6,4.6 H210.4" stroke="#e6f0f5" stroke-width="1"/><path d="M242.2,6 H246 L244.1,8.2 Z" fill="#e6f0f5"/><path d="M250.5,4.4 H254.5 M250.5,6.2 H254.5 L252.5,8.4 Z" fill="#e6f0f5" stroke="#e6f0f5" stroke-width="0.7"/><path d="M982.3,9.2 H987" stroke="#fff" stroke-width="1.1"/><path d="M997.6,6 H1002.2 V9.6 H997.6 Z M999,6 V4.5 H1003.8 V8.2 H1002.2" fill="none" stroke="#fff" stroke-width="0.9"/><path d="M1013.4,4 L1019.2,9.4 M1019.2,4 L1013.4,9.4" stroke="#fff" stroke-width="1.2"/><circle cx="962" cy="21.4" r="2.6" fill="none" stroke="#666" stroke-width="0.9"/><path d="M960.2,23.4 L956.6,27" stroke="#666" stroke-width="1.1"/><path d="M971.4,21.4 V19.2 H973.8 M978.2,19.2 H980.6 V21.4 M980.6,25.4 V27.6 H978.2 M973.8,27.6 H971.4 V25.4" fill="none" stroke="#e6f0f5" stroke-width="0.9"/><path d="M985.4,25.8 L989.9,21 L994.4,25.8" fill="none" stroke="#e6f0f5" stroke-width="1"/><circle cx="1003.5" cy="23.4" r="4.2" fill="none" stroke="#e6f0f5" stroke-width="0.8"/><path d="M1017.5,19 V25.6 M1017.5,27 V28.3" stroke="#e6f0f5" stroke-width="1.1"/></svg>
<svg width="1024" height="576" viewBox="0 0 1024 576"><path d="M103,92.5 H109 L106.8,96 V99.5 L105.2,98.5 V96 Z" fill="none" stroke="#c9c9c9" stroke-width="0.8" stroke-linejoin="round"/><path d="M108.5,99 L110,100.5" stroke="#c9c9c9" stroke-width="0.8"/><path d="M217.8,92.6 H224.5 L222.2,96 V100.4 H220 V96 Z" fill="#e9e9e9" stroke="#444" stroke-width="0.8" stroke-linejoin="round"/><rect x="222.2" y="96.4" width="4" height="4.6" fill="#fff" stroke="#444" stroke-width="0.7"/><path d="M228.4,95.2 H232 L230.2,97.4 Z" fill="#333"/><path d="M238,93 H244.5 V100 H238 Z M239.5,94.5 L243,98.5 M243,94.5 L239.5,98.5" fill="none" stroke="#c9c9c9" stroke-width="0.8"/><path d="M251.2,95 L255,93 L258.6,95 V98.4 L255,100.4 L251.2,98.4 Z M256.5,97 H260 M258.2,95.3 V98.8" fill="none" stroke="#c9c9c9" stroke-width="0.8"/><path d="M264.5,92.8 H271 V98 H264.5 Z M269.5,96.5 V101 M267.2,98.8 H271.8" fill="none" stroke="#c9c9c9" stroke-width="0.8"/><path d="M276.9,95.2 H280.5 L278.7,97.4 Z" fill="#333"/><polygon points="287,94.0 291.8,91.4 296.5,94.0 296.5,98.4 291.8,101.0 287,98.4" fill="#c6c6c6" stroke="#8a8a8a" stroke-width="0.7" stroke-linejoin="round"/><polygon points="287,94.0 291.8,91.4 296.5,94.0 291.8,96.60000000000001" fill="#e9e9e9"/><polygon points="291.8,96.60000000000001 296.5,94.0 296.5,98.4 291.8,101.0" fill="#a4a4a4"/><path d="M289.5,96.6 L292,98 L294.6,96.6" stroke="#f0923a" stroke-width="1.2" fill="none"/><polygon points="299.9,94.0 304.7,91.4 309.4,94.0 309.4,98.4 304.7,101.0 299.9,98.4" fill="#c6c6c6" stroke="#8a8a8a" stroke-width="0.7" stroke-linejoin="round"/><polygon points="299.9,94.0 304.7,91.4 309.4,94.0 304.7,96.60000000000001" fill="#e9e9e9"/><polygon points="304.7,96.60000000000001 309.4,94.0 309.4,98.4 304.7,101.0" fill="#a4a4a4"/><polygon points="302.3,95.6 304.7,96.9 304.7,99.5 302.3,98.2" fill="#f0923a"/><polygon points="304.7,96.9 307,95.6 307,98.2 304.7,99.5" fill="#d9771f"/><path d="M214.8,113.4 L217.0,109.2 C218.0,107.60000000000001 220.20000000000002,107.9 220.4,109.8 L220.60000000000002,111.2 L222.60000000000002,112.8 L222.4,114.60000000000001 C219.8,116.2 216.8,115.8 214.8,113.4 Z" fill="#b0b0b0" stroke="#d9d9d9" stroke-width="0.6" stroke-linejoin="round"/><path d="M215.4,113.2 C217.20000000000002,114.8 219.8,114.8 222.0,113.2  L220.4,111.60000000000001 C219.20000000000002,112.60000000000001 217.4,112.4 216.4,111.4 Z" fill="#e3e3e3"/><path d="M318.9,113.4 L321.09999999999997,109.2 C322.09999999999997,107.60000000000001 324.29999999999995,107.9 324.5,109.8 L324.7,111.2 L326.7,112.8 L326.5,114.60000000000001 C323.9,116.2 320.9,115.8 318.9,113.4 Z" fill="#9c9c9c" stroke="#6e6e6e" stroke-width="0.6" stroke-linejoin="round"/><path d="M319.5,113.2 C321.29999999999995,114.8 323.9,114.8 326.09999999999997,113.2  L324.5,111.60000000000001 C323.29999999999995,112.60000000000001 321.5,112.4 320.5,111.4 Z" fill="#cfcfcf"/><path d="M422.6,113.4 L424.8,109.2 C425.8,107.60000000000001 428.0,107.9 428.20000000000005,109.8 L428.40000000000003,111.2 L430.40000000000003,112.8 L430.20000000000005,114.60000000000001 C427.6,116.2 424.6,115.8 422.6,113.4 Z" fill="#9c9c9c" stroke="#6e6e6e" stroke-width="0.6" stroke-linejoin="round"/><path d="M423.20000000000005,113.2 C425.0,114.8 427.6,114.8 429.8,113.2  L428.20000000000005,111.60000000000001 C427.0,112.60000000000001 425.20000000000005,112.4 424.20000000000005,111.4 Z" fill="#cfcfcf"/><path d="M302.2,109.6 H298.8 V115.0 H303.40000000000003 V113.19999999999999 M301.40000000000003,109.8 L303.40000000000003,111.8 L301.40000000000003,112.19999999999999 Z" fill="none" stroke="#fff" stroke-width="0.8"/><path d="M405.79999999999995,109.6 H402.4 V115.0 H407.0 V113.19999999999999 M405.0,109.8 L407.0,111.8 L405.0,112.19999999999999 Z" fill="none" stroke="#555" stroke-width="0.8"/><path d="M483.4,109.6 H480 V115.0 H484.6 V113.19999999999999 M482.6,109.8 L484.6,111.8 L482.6,112.19999999999999 Z" fill="none" stroke="#555" stroke-width="0.8"/><path d="M306.8,110 L311.2,114.6 M311.2,110 L306.8,114.6" stroke="#d7e6ee" stroke-width="0.9"/></svg>
<svg width="1024" height="576" viewBox="0 0 1024 576"><rect x="0" y="170.4" width="15.2" height="22.4" fill="#fafafa"/><circle cx="6.2" cy="111.2" r="2.5" fill="none" stroke="#3a3a3a" stroke-width="0.9"/><circle cx="6.2" cy="111.2" r="3.2" fill="none" stroke="#3a3a3a" stroke-width="0.7" stroke-dasharray="1 1.51"/><polygon points="4.4,133.16 8.360000000000001,131 12.32,133.16 12.32,137.66 8.360000000000001,139.82 4.4,137.66" fill="#bdbdbd" stroke="#6a6a6a" stroke-width="0.7" stroke-linejoin="round"/><polygon points="4.4,133.16 8.360000000000001,131 12.32,133.16 8.360000000000001,135.32" fill="#e2e2e2"/><polygon points="8.360000000000001,135.32 12.32,133.16 12.32,137.66 8.360000000000001,139.82" fill="#8e8e8e"/><polygon points="2.6,137.35999999999999 6.5600000000000005,135.2 10.520000000000001,137.35999999999999 10.520000000000001,141.85999999999999 6.5600000000000005,144.01999999999998 2.6,141.85999999999999" fill="#bdbdbd" stroke="#6a6a6a" stroke-width="0.7" stroke-linejoin="round"/><polygon points="2.6,137.35999999999999 6.5600000000000005,135.2 10.520000000000001,137.35999999999999 6.5600000000000005,139.51999999999998" fill="#e2e2e2"/><polygon points="6.5600000000000005,139.51999999999998 10.520000000000001,137.35999999999999 10.520000000000001,141.85999999999999 6.5600000000000005,144.01999999999998" fill="#8e8e8e"/><polygon points="1,157.12 5.620000000000001,154.6 10.240000000000002,157.12 10.240000000000002,162.37 5.620000000000001,164.89 1,162.37" fill="#f58220" stroke="#6a6a6a" stroke-width="0.7" stroke-linejoin="round"/><polygon points="1,157.12 5.620000000000001,154.6 10.240000000000002,157.12 5.620000000000001,159.64" fill="#fbad52"/><polygon points="5.620000000000001,159.64 10.240000000000002,157.12 10.240000000000002,162.37 5.620000000000001,164.89" fill="#df6f12"/><path d="M7.4,159.4 L14.4,165.8 V159.4 L7.4,165.8 Z" fill="#eee" fill-opacity="0.7" stroke="#444" stroke-width="0.8" stroke-linejoin="round"/><path d="M1.7,184.0 L4.7,178.4 C6.3,176.4 9.7,176.8 9.899999999999999,179.4 L10.1,181.4 L13.7,183.6 L13.299999999999999,185.6 C9.7,188.0 4.7,187.6 1.7,184.0 Z" fill="#a6a6a6" stroke="#5e5e5e" stroke-width="0.7" stroke-linejoin="round"/><path d="M2.5,183.8 C5.3,186.0 9.299999999999999,186.0 12.7,184.0 L9.899999999999999,181.8 C8.1,183.2 5.5,182.8 4.1,181.4 Z" fill="#d6d6d6"/><g transform="translate(0 2.8)"><path d="M2.6,207 C5,204.4 3.4,197.4 7.3,196.4 C11.2,197.4 9.6,204.4 12,207 Z M6,207.8 C6.2,209.8 8.4,209.8 8.6,207.8 M7.3,194.8 V196.4" fill="none" stroke="#555" stroke-width="0.9" stroke-linejoin="round"/></g><g transform="translate(0 8.6)"><path d="M2.6,214.9 L7.2,212.5 L12,214.7 V222.9 L7.2,225.5 L2.6,223.1 Z M2.6,214.9 L7.2,217.1 L12,214.7 M7.2,217.1 V225.5" fill="#e6e6e6" stroke="#555" stroke-width="0.8" stroke-linejoin="round"/></g><g transform="translate(0 11)"><path d="M1.8,241.65 L4.6499999999999995,236.33 C6.169999999999999,234.43 9.4,234.81 9.59,237.28 L9.78,239.18 L13.2,241.27 L12.82,243.17 C9.4,245.45 4.6499999999999995,245.07 1.8,241.65 Z" fill="#a6a6a6" stroke="#5e5e5e" stroke-width="0.7" stroke-linejoin="round"/><path d="M2.56,241.46 C5.22,243.55 9.02,243.55 12.25,241.65 L9.59,239.56 C7.88,240.89 5.41,240.51 4.08,239.18 Z" fill="#d6d6d6"/><path d="M8.5,233.2 L13,232.4 M13,232.4 L11.2,236.4" stroke="#ee7d1a" stroke-width="1" fill="none"/><circle cx="13" cy="232.6" r="1" fill="#ee7d1a"/></g><g transform="translate(0 9.4)"><polygon points="1.6,261 7,258 12,260.4 12,265.4 6.6,269.4 1.6,266.4" fill="#dadada" stroke="#555" stroke-width="0.8" stroke-linejoin="round"/><path d="M1.6,261 L6.6,263.8 L12,260.4 M6.6,263.8 V269.4" stroke="#555" stroke-width="0.7" fill="none"/><circle cx="11" cy="264.2" r="2.6" fill="#fff" stroke="#555" stroke-width="0.8"/><path d="M1.8,258 L5,256.4 L5.6,259" stroke="#ee7d1a" stroke-width="1" fill="none"/></g><g transform="translate(0 0.6)"><circle cx="6.2" cy="303" r="4.6" fill="#a2a2a2" stroke="#777" stroke-width="0.6"/><path d="M5.6,298.4 V307.6" stroke="#d6d6d6" stroke-width="1"/><path d="M5.5,296 C10,295.6 12.8,298.4 13,302" fill="none" stroke="#c9c9c9" stroke-width="0.8"/></g><rect x="1.2" y="325.4" width="12.4" height="11.8" fill="#e9eef1" stroke="#555" stroke-width="0.8"/><path d="M1.2,327.4 H13.6" stroke="#555" stroke-width="0.8"/><circle cx="7.4" cy="332.2" r="4" fill="#2f8fb8"/><path d="M5,330.6 C6.4,331.6 6,333.4 7.6,334 M8.4,329 C9.4,330.4 10.6,330.6 10.4,332.4" stroke="#cfe6f0" stroke-width="0.8" fill="none"/><circle cx="7.4" cy="359.2" r="6" fill="#f1f1f1" stroke="#555" stroke-width="0.8"/><path d="M7.4,354.6 V359.6 H4.4" stroke="#555" stroke-width="0.8" fill="none"/><rect x="2.2" y="375.4" width="3.8" height="2.2" fill="#e03a2a"/><rect x="2.2" y="377.5" width="3.8" height="2.2" fill="#f0922a"/><rect x="2.2" y="379.6" width="3.8" height="2.2" fill="#e8dc30"/><rect x="2.2" y="381.7" width="3.8" height="2.2" fill="#46b84a"/><rect x="2.2" y="383.8" width="3.8" height="2.2" fill="#2a9ad8"/><rect x="2.2" y="385.9" width="3.8" height="2.2" fill="#3a4ad0"/><path d="M7,378 L12,387 L9.6,386.4 L7.4,381.6 Z" fill="#222"/><path d="M3,399.6 H5.6 V409 H3 Z" fill="#2f8fd0"/><path d="M2,406.6 H7 L6.4,409.6 H2.6 Z" fill="#6ab6e6"/><path d="M7,401.6 L12.6,400 L9.4,404.6 L12.4,409.8 L8.2,406.4 Z" fill="#2b4f7a"/><path d="M3,409.4 H6 V410.6 H3 Z" fill="#e8c43a"/><rect x="1.6" y="423" width="11.6" height="10.2" fill="#f6f6f6" stroke="#444" stroke-width="0.8"/><path d="M4.6,423 V421 H10.2 V423" fill="none" stroke="#444" stroke-width="0.8"/><path d="M3.4,425 L11.4,431.6 M11.4,425 L3.4,431.6" stroke="#444" stroke-width="1.2"/><circle cx="7.4" cy="426.2" r="1.4" fill="#fff" stroke="#444" stroke-width="0.7"/><circle cx="1013.4" cy="117" r="3" fill="#fff" stroke="#555" stroke-width="0.8"/><circle cx="1017.4" cy="115.6" r="2.8" fill="#fff" stroke="#555" stroke-width="0.8"/><circle cx="1019" cy="119.4" r="2.6" fill="#fff" stroke="#555" stroke-width="0.8"/><path d="M1017,121.4 L1014.6,123.6" stroke="#555" stroke-width="1"/><polygon points="1009.4,131.6 1015.8,128.2 1022.4,131.4 1022.4,137.4 1019,139.6 1015.8,137.8 1012.8,139.6 1009.4,137.6" fill="#8f979b" stroke="#4d6a78" stroke-width="0.7" stroke-linejoin="round"/><polygon points="1009.4,131.6 1015.8,128.2 1022.4,131.4 1019,133.6 1015.8,132 1012.8,133.6" fill="#bfe3f2" stroke="#3a8fb4" stroke-width="0.7" stroke-linejoin="round"/><polygon points="1009.4,131.8 1012.8,133.8 1012.8,139.4 1009.4,137.6" fill="#c9cdd0"/><path d="M1009.6,147 C1013,145 1016,146.6 1019.6,145.4 M1011,145.4 C1010,149 1010.6,152.4 1012.6,154.4 M1010,151 C1012.6,149 1015.6,148.6 1018,149.6" fill="none" stroke="#3aa6d6" stroke-width="0.8"/><path d="M1013.6,157.2 L1018.4,152.8 C1017.4,150.6 1019.2,148.8 1021.2,149.2 L1019.8,150.8 L1020.8,152 L1022.4,150.8 C1022.6,152.8 1021,154.4 1019.2,153.8 L1014.6,158 Z" fill="#ececec" stroke="#555" stroke-width="0.7" stroke-linejoin="round"/><polygon points="1009.1999999999999,170.2 1015.8,167.2 1022.4,170.2 1022.4,171.79999999999998 1015.8,174.79999999999998 1009.1999999999999,171.79999999999998" fill="#c8c8c8" stroke="#5e5e5e" stroke-width="0.7" stroke-linejoin="round"/><path d="M1012.1999999999999,163.79999999999998 V169.6 A3.6,1.6 0 0 0 1019.4,169.6 V163.79999999999998 Z" fill="#f58220"/><ellipse cx="1015.8" cy="163.79999999999998" rx="3.6" ry="1.6" fill="#fbad52"/><polygon points="1009.2,183.0 1013.6,180.6 1018.0,183.0 1018.0,188.0 1013.6,190.4 1009.2,188.0" fill="#f58220" stroke="#6a6a6a" stroke-width="0.7" stroke-linejoin="round"/><polygon points="1009.2,183.0 1013.6,180.6 1018.0,183.0 1013.6,185.4" fill="#fbad52"/><polygon points="1013.6,185.4 1018.0,183.0 1018.0,188.0 1013.6,190.4" fill="#df6f12"/><path d="M1016,185.4 L1022.6,191.6 V185.4 L1016,191.6 Z" fill="#f2f2f2" fill-opacity="0.7" stroke="#444" stroke-width="0.8" stroke-linejoin="round"/><polygon points="1008.4,203 1015,200 1021.6,203 1021.6,204.6 1015,207.6 1008.4,204.6" fill="#c8c8c8" stroke="#5e5e5e" stroke-width="0.7" stroke-linejoin="round"/><path d="M1011.4,196.6 V202.4 A3.6,1.6 0 0 0 1018.6,202.4 V196.6 Z" fill="#f58220"/><ellipse cx="1015" cy="196.6" rx="3.6" ry="1.6" fill="#fbad52"/><path d="M1013,208.6 L1018,204.6 C1017.2,202.8 1018.8,201.2 1020.6,201.6 L1019.4,203 L1020.2,204 L1021.6,203 C1021.8,204.8 1020.4,206 1018.8,205.6 L1014,209.4 Z" fill="#ececec" stroke="#555" stroke-width="0.7" stroke-linejoin="round"/><polygon points="1009.2,217.0 1013.6,214.6 1018.0,217.0 1018.0,222.0 1013.6,224.4 1009.2,222.0" fill="#f58220" stroke="#6a6a6a" stroke-width="0.7" stroke-linejoin="round"/><polygon points="1009.2,217.0 1013.6,214.6 1018.0,217.0 1013.6,219.4" fill="#fbad52"/><polygon points="1013.6,219.4 1018.0,217.0 1018.0,222.0 1013.6,224.4" fill="#df6f12"/><path d="M1018.6,218 L1020.4,220 H1019.4 V221.4 H1020.8 V220.4 L1022.8,222.2 L1020.8,224 V223 H1019.4 V224.4 H1020.4 L1018.6,226.6 L1016.8,224.4 H1017.8 V223 H1016.4 V224 L1014.4,222.2 L1016.4,220.4 V221.4 H1017.8 V220 H1016.8 Z" fill="#fff" stroke="#444" stroke-width="0.6" stroke-linejoin="round"/><rect x="1009.6" y="230.4" width="8.8" height="6.4" fill="#fff" stroke="#444" stroke-width="0.8"/><path d="M1011.4,233.4 H1014 M1015,233.4 H1016.6" stroke="#444" stroke-width="0.8"/><rect x="1010.6" y="236.8" width="11.4" height="6" fill="#e4e4e4" stroke="#444" stroke-width="0.8"/><path d="M1013,236.8 V242.8 M1015.2,236.8 V242.8 M1017.4,236.8 V242.8 M1019.6,236.8 V242.8" stroke="#444" stroke-width="0.6"/><path d="M1018.4,234.6 H1022 V237" fill="none" stroke="#2f8fb8" stroke-width="1"/><rect x="1009.6" y="250.6" width="12.2" height="8" fill="#fff" stroke="#6cc4e0" stroke-width="0.9"/><path d="M1010,270.6 Q1015.6,264.6 1021.4,270.6 Q1015.6,276.6 1010,270.6 Z" fill="none" stroke="#555" stroke-width="0.8"/><circle cx="1015.6" cy="270.6" r="1.8" fill="none" stroke="#555" stroke-width="0.8"/><path d="M1011,276 L1020.6,265.2" stroke="#555" stroke-width="0.8"/></svg>
<svg width="1024" height="576" viewBox="0 0 1024 576"><polygon points="28.2,212.4 31.8,210.4 35.6,212.0 35.6,216.4 32.0,218.4 28.2,216.6" fill="#f2c230" stroke="#b98a10" stroke-width="0.5" stroke-linejoin="round"/><polygon points="28.2,212.4 31.8,210.4 35.6,212.0 32.0,214.0" fill="#fbe38a"/><polygon points="32.0,214.0 35.6,212.0 35.6,216.4 32.0,218.4" fill="#d9a21a"/><polygon points="38.4,225.6 42.0,223.6 45.8,225.2 45.8,229.6 42.199999999999996,231.6 38.4,229.79999999999998" fill="#f2c230" stroke="#b98a10" stroke-width="0.5" stroke-linejoin="round"/><polygon points="38.4,225.6 42.0,223.6 45.8,225.2 42.199999999999996,227.2" fill="#fbe38a"/><polygon points="42.199999999999996,227.2 45.8,225.2 45.8,229.6 42.199999999999996,231.6" fill="#d9a21a"/><path d="M33,227.6 H37.6" stroke="#bdbdbd" stroke-width="0.7"/><polygon points="313.4,300.6 317.6,298.4 322.4,300 322.4,305 319,306.6 319,309.6 315.6,310.6 313.4,309.4" fill="#c4b4ac" opacity="0.85"/><polygon points="313.4,300.6 317.6,298.4 322.4,300 318,302.2" fill="#ddd0ca"/><rect x="330.2" y="298.4" width="12.4" height="12" fill="#dfe9ec" stroke="#444" stroke-width="0.9"/><path d="M330.2,300.6 H342.6" stroke="#444" stroke-width="0.9"/><path d="M337,302 A3.9,3.9 0 0 0 337,309.8 Z" fill="#f08a1e"/><path d="M337,302 V309.8" stroke="#444" stroke-width="0.7"/><path d="M337.6,301.6 L337.6,309.2 L339.4,307.6 L340.6,310 L341.6,309.5 L340.5,307.2 L342.8,307 Z" fill="#fff" stroke="#222" stroke-width="0.6" stroke-linejoin="round"/><path d="M349.4,309.6 V302 H352.4 L353.4,303.4 H356.6 V309.6 M355.4,302.6 C356,300.6 357.4,299.4 359.6,299.4 M358,298.4 L359.8,299.4 L358.6,301" fill="none" stroke="#d0d0d0" stroke-width="0.8"/></svg>
<svg width="1024" height="576" viewBox="0 0 1024 576"><polygon points="395.2,38.4 398.4,36.2 401,37.4 401,43 398,44.4 395.2,43" fill="#f58220"/><rect x="398.4" y="37.6" width="5.6" height="6.4" fill="#fff" stroke="#444" stroke-width="0.8"/><path d="M401.2,37.6 V44 M398.4,40.8 H404" stroke="#444" stroke-width="0.8"/><polygon points="395.4,52 399,49.8 401,51 401,56.6 398,58 395.4,56.6" fill="#9a9a9a" stroke="#555" stroke-width="0.6"/><path d="M395.4,54 L398,55.4 L401,54 M398,52.6 V58" stroke="#666" stroke-width="0.5" fill="none"/><polygon points="399.6,57.6 404.2,57.6 402,52.2" fill="#cfcfcf" stroke="#444" stroke-width="0.7" stroke-linejoin="round"/><circle cx="397.6" cy="69" r="2.6" fill="#f58220"/><polygon points="399,66 401.6,63.6 404,64.8 404,68.6 401.6,70.4 399,69" fill="#8a8a8a" stroke="#444" stroke-width="0.6"/><path d="M397.4,69.6 L401.6,66.6" stroke="#fff" stroke-width="0.8"/><circle cx="660.6" cy="37.6" r="1.5" fill="none" stroke="#444" stroke-width="0.8"/><ellipse cx="659" cy="41.2" rx="2.8" ry="2.2" fill="none" stroke="#444" stroke-width="0.8"/><ellipse cx="662.4" cy="41.6" rx="2.4" ry="2" fill="none" stroke="#444" stroke-width="0.8"/><circle cx="658.6" cy="51.4" r="2.2" fill="#ddd" stroke="#777" stroke-width="0.7"/><ellipse cx="661.8" cy="54.2" rx="3.4" ry="2" transform="rotate(-35 661.8 54.2)" fill="none" stroke="#444" stroke-width="0.8"/><ellipse cx="659.8" cy="56.2" rx="2.6" ry="1.5" transform="rotate(-35 659.8 56.2)" fill="none" stroke="#444" stroke-width="0.7"/><circle cx="660.6" cy="68" r="3.9" fill="none" stroke="#444" stroke-width="0.8"/><path d="M662.8,66.4 A2.3,2.3 0 1 0 662.8,69.6" fill="none" stroke="#444" stroke-width="0.8"/><path d="M655.8,68 H657.4" stroke="#444" stroke-width="0.7"/><polygon points="817.6,38.2 821.4,36 825.4,38 825.4,42.4 821.6,44.6 817.6,42.4" fill="#bdbdbd" stroke="#8a8a8a" stroke-width="0.5" stroke-linejoin="round"/><polygon points="818.6,38.2 821.4,36.6 823.6,37.8 821.0,39.6" fill="#d8242c"/><polygon points="818.6,38.4 821.0,39.8 821.0,42.6 818.6,41.2" fill="#b8202a"/><rect x="822.4" y="40.4" width="3.8" height="3.8" rx="0.8" fill="#fff" stroke="#444" stroke-width="0.7"/><path d="M823.4,42.3 H825.2" stroke="#444" stroke-width="0.6"/><rect x="818.2" y="50.4" width="7" height="6.4" fill="#fff" stroke="#555" stroke-width="0.8"/><path d="M818.2,52.8 H825.2 M818.2,54.8 H825.2 M821.2,50.4 V56.8" stroke="#555" stroke-width="0.6"/><polygon points="817.6,65.6 821.4,63.4 825.4,65.4 825.4,69.8 821.6,72.0 817.6,69.8" fill="#bdbdbd" stroke="#8a8a8a" stroke-width="0.5" stroke-linejoin="round"/><polygon points="818.6,65.6 821.4,64.0 823.6,65.2 821.0,67.0" fill="#d8242c"/><polygon points="818.6,65.8 821.0,67.2 821.0,70.0 818.6,68.6" fill="#b8202a"/><circle cx="823.8" cy="68.4" r="2" fill="#fff" stroke="#444" stroke-width="0.7"/><path d="M822.4,70 L820.8,71.8" stroke="#444" stroke-width="0.9"/></svg>
<svg width="1024" height="576" viewBox="0 0 1024 576"><defs><linearGradient id="gp" x1="0" x2="1" y1="0" y2="0"><stop offset="0" stop-color="#888888"/><stop offset="0.08" stop-color="#9c9c9c"/><stop offset="0.3" stop-color="#adadad"/><stop offset="0.6" stop-color="#a6a6a6"/><stop offset="1" stop-color="#9b9b9b"/></linearGradient><linearGradient id="gc" x1="0" x2="1" y1="0" y2="0"><stop offset="0" stop-color="#2a2b2c"/><stop offset="0.3" stop-color="#3a3b3c"/><stop offset="0.55" stop-color="#2f3031"/><stop offset="0.8" stop-color="#3a3b3c"/><stop offset="1" stop-color="#262728"/></linearGradient><linearGradient id="gk" x1="0" x2="1" y1="0" y2="0"><stop offset="0" stop-color="#2b2c2d"/><stop offset="0.35" stop-color="#3b3c3d"/><stop offset="0.7" stop-color="#303132"/><stop offset="1" stop-color="#252627"/></linearGradient><linearGradient id="gf" x1="0" x2="0" y1="0" y2="1"><stop offset="0" stop-color="#3a3b3c"/><stop offset="0.12" stop-color="#2e2f30"/><stop offset="1" stop-color="#2b2c2d"/></linearGradient><pattern id="grid" width="1" height="1" patternUnits="userSpaceOnUse" patternTransform="matrix(3.152 0.443 -2.683 1.092 532 436.6)"><rect width="1" height="1" fill="#b3b3b3"/><rect x="0.2" y="0.2" width="0.6" height="0.6" rx="0.2" fill="#3c3c3c"/></pattern><filter id="bl" x="-5%" y="-20%" width="110%" height="140%"><feGaussianBlur stdDeviation="1.1"/></filter></defs><path d="M395.6,338.7 L395.6,460 A40.6,10.5 0 0 0 476.8,460 L476.8,338.7 Z" fill="url(#gp)" stroke="#777" stroke-width="0.6"/><rect x="410.5" y="361" width="12" height="99" rx="5.5" fill="none" stroke="#777" stroke-width="0.9"/><rect x="412.6" y="363" width="7.8" height="95" rx="3.8" fill="none" stroke="#8a8a8a" stroke-width="0.6"/><ellipse cx="436.2" cy="338.7" rx="40.6" ry="10.5" fill="#383838" stroke="#2a2a2a" stroke-width="0.8"/><path d="M434.2,330 C434.6,324 435.6,318.4 439.4,315.4 C442,313.4 444.6,313.2 447.4,313.4 L458.4,314.8" fill="none" stroke="#6f6f62" stroke-width="4.2" stroke-linecap="round"/><path d="M434.2,330 C434.6,324 435.6,318.4 439.4,315.4 C442,313.4 444.6,313.2 447.4,313.4 L458.4,314.8" fill="none" stroke="#ecebdc" stroke-width="2.8" stroke-linecap="round"/><path d="M478.6,325.4 C481.4,329 484.4,332.6 488.4,334.2 C492,335.6 496,335.6 498.6,334.2 C500.6,333 501.8,331.6 502.8,330" fill="none" stroke="#6f6f62" stroke-width="4" stroke-linecap="round"/><path d="M478.6,325.4 C481.4,329 484.4,332.6 488.4,334.2 C492,335.6 496,335.6 498.6,334.2 C500.6,333 501.8,331.6 502.8,330" fill="none" stroke="#ecebdc" stroke-width="2.6" stroke-linecap="round"/><path d="M464,447.6 L590.7,396 L762,420.6 L763.6,443.2 L632.4,497.2 L466,473.4 Z" fill="#2d2e2f" stroke="#2d2e2f" stroke-width="7" stroke-linejoin="round"/><path d="M464,447.6 L590.7,396 L762,420.6 L634.4,472.6 Z" fill="#2d2d2e"/><path d="M634.4,472.6 L762,420.6 L765,445 L632.6,499.6 Z" fill="#29292a"/><path d="M462,448.4 L634.6,473.4 L764.4,420.2" fill="none" stroke="#424243" stroke-width="2.8" stroke-linejoin="round" filter="url(#bl)"/><path d="M499.8,449.7 L532,436.6 L664.4,455.2 L633.5,468.4 Z" fill="url(#grid)"/><path d="M536,300 L756,290 L756,420 L669.5,455 L536,436 Z" fill="#2d2e2f"/><path d="M670,300 L756,290 L756,420 L669.5,455 Z" fill="#2a2b2c"/><path d="M504.8,325 L536.8,330 L536.8,435 L504.8,428 Z" fill="#8199a4"/><path d="M533.8,330 L536.6,330 L536.6,435 L533.8,434.4 Z" fill="#a3c3ce"/><path d="M505.4,325 L505.4,428" stroke="#5d6d75" stroke-width="0.8"/><path d="M536,392.5 L669.3,411.4 L669.3,453.4 L536,434.5 Z" fill="#9d9d9d"/><path d="M536,392.5 L536,434.5" stroke="#c4c4c4" stroke-width="1"/><path d="M460.6,233.6 L588.8,179.4 L760.6,205.6 L762.8,289.4 L634.8,344.4 L461.4,319 Z" fill="#2d2e2f" stroke="#2d2e2f" stroke-width="4.4" stroke-linejoin="round"/><path d="M460.6,233.6 L588.8,179.4 L760.6,205.6 L634,260 Z" fill="#2e2e2f"/><path d="M634,260 L760.6,205.6 L762.8,289.4 L634.8,344.4 Z" fill="#2a2a2b"/><path d="M460.6,233.6 L634,260 L634.8,344.4 L461.4,319 Z" fill="#2c2c2d"/><path d="M460,234 L634,261 L761,206.4" fill="none" stroke="#454546" stroke-width="2.6" stroke-linejoin="round" filter="url(#bl)"/><path d="M632.6,262 L633.2,344" fill="none" stroke="#3c3c3d" stroke-width="2.4" filter="url(#bl)"/><path d="M503.5,214 L588.5,178.2 L602,180.2 L596,196 L583,199.4 L532.6,219.5 Z" fill="#9eb0b9" stroke="#1e1f20" stroke-width="0.8" stroke-linejoin="round"/><path d="M582,190.3 L582,208 A66,16 0 0 0 714,208 L714,190.3 Z" fill="url(#gc)"/><ellipse cx="648" cy="190.3" rx="65.2" ry="15.8" fill="#9db0b9" stroke="#1d1e1f" stroke-width="2"/><path d="M623,174.5 L626.7,189.5 A21,7 0 0 0 668.7,189.5 L671.6,174.5 Z" fill="url(#gk)"/><ellipse cx="647.3" cy="174.5" rx="24.3" ry="6.6" fill="#323334"/><path d="M482.1,244.6 L594.6,260.9 L595.2,335.2 L483.2,318.6 Z" fill="#d28a3c" stroke="#ef9a2e" stroke-width="1.2" stroke-linejoin="round"/><path d="M470.3,243.6 L480.8,245.28 L480.8,256.68 L470.3,255.00 Z" fill="#7a8f98" stroke="#38434a" stroke-width="0.9"/><ellipse cx="475.55" cy="250.14" rx="3.78" ry="3.88" fill="#94a9b2" stroke="#6a7e87" stroke-width="0.6"/><path d="M597.5,262.8 L608.3,264.53 L608.3,275.93 L597.5,274.20 Z" fill="#7a8f98" stroke="#38434a" stroke-width="0.9"/><ellipse cx="602.90" cy="269.36" rx="3.89" ry="3.88" fill="#94a9b2" stroke="#6a7e87" stroke-width="0.6"/><path d="M470.3,258.9 L480.8,260.58 L480.8,271.98 L470.3,270.30 Z" fill="#7a8f98" stroke="#38434a" stroke-width="0.9"/><ellipse cx="475.55" cy="265.44" rx="3.78" ry="3.88" fill="#94a9b2" stroke="#6a7e87" stroke-width="0.6"/><path d="M597.5,278.1 L608.3,279.83 L608.3,291.23 L597.5,289.50 Z" fill="#7a8f98" stroke="#38434a" stroke-width="0.9"/><ellipse cx="602.90" cy="284.66" rx="3.89" ry="3.88" fill="#94a9b2" stroke="#6a7e87" stroke-width="0.6"/><path d="M470.3,274.2 L480.8,275.88 L480.8,287.28 L470.3,285.60 Z" fill="#7a8f98" stroke="#38434a" stroke-width="0.9"/><ellipse cx="475.55" cy="280.74" rx="3.78" ry="3.88" fill="#94a9b2" stroke="#6a7e87" stroke-width="0.6"/><path d="M597.5,293.40000000000003 L608.3,295.13 L608.3,306.53 L597.5,304.80 Z" fill="#7a8f98" stroke="#38434a" stroke-width="0.9"/><ellipse cx="602.90" cy="299.96" rx="3.89" ry="3.88" fill="#94a9b2" stroke="#6a7e87" stroke-width="0.6"/><path d="M470.3,289.5 L480.8,291.18 L480.8,302.58 L470.3,300.90 Z" fill="#7a8f98" stroke="#38434a" stroke-width="0.9"/><ellipse cx="475.55" cy="296.04" rx="3.78" ry="3.88" fill="#94a9b2" stroke="#6a7e87" stroke-width="0.6"/><path d="M597.5,308.70000000000005 L608.3,310.43 L608.3,321.83 L597.5,320.10 Z" fill="#7a8f98" stroke="#38434a" stroke-width="0.9"/><ellipse cx="602.90" cy="315.26" rx="3.89" ry="3.88" fill="#94a9b2" stroke="#6a7e87" stroke-width="0.6"/><path d="M470.3,304.8 L480.8,306.48 L480.8,317.88 L470.3,316.20 Z" fill="#7a8f98" stroke="#38434a" stroke-width="0.9"/><ellipse cx="475.55" cy="311.34" rx="3.78" ry="3.88" fill="#94a9b2" stroke="#6a7e87" stroke-width="0.6"/><path d="M597.5,324.0 L608.3,325.73 L608.3,337.13 L597.5,335.40 Z" fill="#7a8f98" stroke="#38434a" stroke-width="0.9"/><ellipse cx="602.90" cy="330.56" rx="3.89" ry="3.88" fill="#94a9b2" stroke="#6a7e87" stroke-width="0.6"/><path d="M525.2,334.4 L525.2,342.4 A6.25,2.00 0 0 0 537.7,342.4 L537.7,334.4 Z" fill="#e2e2e2" stroke="#8b8b8b" stroke-width="0.5"/><path d="M533.95,334.4 L533.95,343.4 L537.7,342.4 L537.7,334.4 Z" fill="#bdbdbd"/><path d="M583,343.5 L583,352.5 A4.75,1.52 0 0 0 592.5,352.5 L592.5,343.5 Z" fill="#e2e2e2" stroke="#8b8b8b" stroke-width="0.5"/><path d="M589.65,343.5 L589.65,353.5 L592.5,352.5 L592.5,343.5 Z" fill="#bdbdbd"/><path d="M604.5,345.5 L604.5,354.5 A5.0,1.60 0 0 0 614.5,354.5 L614.5,345.5 Z" fill="#e2e2e2" stroke="#8b8b8b" stroke-width="0.5"/><path d="M611.50,345.5 L611.50,355.5 L614.5,354.5 L614.5,345.5 Z" fill="#bdbdbd"/><path d="M530,343 L530,356 L533,356 L533,343 Z" fill="#7f939c"/><text x="563.6" y="404.6" font-family="Liberation Sans, sans-serif" font-size="7.6" fill="#1c1c1c" transform="rotate(8 563.6 404.6)" textLength="77.6" lengthAdjust="spacingAndGlyphs">Deluxe Coffee Machine</text><g stroke="#b9b9b9" stroke-width="0.7" fill="#fff" stroke-linejoin="round"><path d="M253.1,495.2 L265.6,490.3 L284.7,492.6 L272.5,498.2 Z"/><path d="M272.5,498.2 L284.7,492.6 L285.2,514.7 L272.5,519.9 Z"/><path d="M253.1,495.2 L272.5,498.2 L272.5,519.9 L253.4,516.4 Z"/></g><path d="M267,494 L267,476.5 L265.3,476.5 L268.6,467.5 L271.9,476.5 L270.2,476.5 L270.2,494 Z" fill="#1a3fd0"/><path d="M277.6,504.3 L292.5,506.6 L292.8,505 L301.5,509.3 L292,512 L292.3,510.2 L277.4,507.9 Z" fill="#c23a36"/><path d="M285,499.8 L285.2,496.8 L289.2,496.2 L287.2,499.2 Z" fill="#2a9a3c"/><text x="266.3" y="464.8" font-family="Liberation Sans, sans-serif" font-size="6" fill="#3c55e0">Z</text><text x="304.4" y="512.4" font-family="Liberation Sans, sans-serif" font-size="6" fill="#c4504c">X</text><text x="290.3" y="497.3" font-family="Liberation Sans, sans-serif" font-size="6" fill="#4aa858">Y</text></svg>
<span class="t" style="left:1px;top:1px;font-size:13px;color:#fff;font-weight:700;transform:scaleX(0.9965);">NX</span>
<span class="t" style="left:213px;top:4px;font-size:8px;color:#e8f1f6;transform:scaleX(0.9489);">Window</span>
<span class="t" style="left:568px;top:4px;font-size:8px;color:#eef5f9;transform:scaleX(1.0259);">NX - Modeling</span>
<span class="t" style="left:928.8px;top:3px;font-size:9.5px;color:#fff;font-weight:700;transform:scaleX(0.8699);">SIEMENS</span>
<span class="t" style="left:8.75px;top:20px;font-size:8.5px;color:#f2f7fa;transform:scaleX(0.9815);">File</span>
<span class="t" style="left:43px;top:20px;font-size:8.5px;color:#f2f7fa;transform:scaleX(1.0138);">Home</span>
<span class="t" style="left:83px;top:20px;font-size:8.5px;color:#f2f7fa;transform:scaleX(0.9793);">Analysis</span>
<span class="t" style="left:131px;top:20px;font-size:8.5px;color:#f2f7fa;transform:scaleX(1.0098);">Application</span>
<span class="t" style="left:189px;top:20px;font-size:8.5px;color:#f2f7fa;transform:scaleX(1.0138);">Curve</span>
<span class="t" style="left:229px;top:20px;font-size:8.5px;color:#f2f7fa;transform:scaleX(0.9681);">Render</span>
<span class="t" style="left:272px;top:20px;font-size:8.5px;color:#f2f7fa;transform:scaleX(1.0009);">Selection</span>
<span class="t" style="left:323px;top:20px;font-size:8.5px;color:#f2f7fa;transform:scaleX(0.9575);">Tools</span>
<span class="t" style="left:359px;top:20px;font-size:8.5px;color:#f2f7fa;transform:scaleX(1.0393);">View</span>
<span class="t" style="left:453px;top:20px;font-size:8.5px;color:#f2f7fa;transform:scaleX(0.9899);">Surface</span>
<span class="t" style="left:394.5px;top:20px;font-size:8.5px;color:#e2cf58;transform:scaleX(0.9547);">Assemblies</span>
<span class="t" style="left:861px;top:20px;font-size:7px;color:#b4bcc2;transform:scaleX(0.9968);">Type Here to Search</span>
<span class="t" style="left:5px;top:56px;font-size:8px;color:#3a3a3a;transform:scaleX(0.9110);">Assemble</span>
<span class="t" style="left:53.3px;top:56px;font-size:8px;color:#3a3a3a;transform:scaleX(0.9625);">Add</span>
<span class="t" style="left:40px;top:66px;font-size:8px;color:#3a3a3a;transform:scaleX(0.9430);">Component</span>
<span class="t" style="left:96.2px;top:56px;font-size:8px;color:#3a3a3a;transform:scaleX(0.8929);">New</span>
<span class="t" style="left:83px;top:66px;font-size:8px;color:#3a3a3a;transform:scaleX(0.9430);">Component</span>
<span class="t" style="left:143px;top:41px;font-size:8px;color:#3a3a3a;transform:scaleX(0.9199);">New Parent Assembly</span>
<span class="t" style="left:143px;top:61px;font-size:8px;color:#3a3a3a;transform:scaleX(0.9431);">New DMU Workset</span>
<span class="t" style="left:237px;top:56px;font-size:8px;color:#3a3a3a;transform:scaleX(0.9712);">Move</span>
<span class="t" style="left:227px;top:66px;font-size:8px;color:#3a3a3a;transform:scaleX(0.9430);">Component</span>
<span class="t" style="left:273px;top:56px;font-size:8px;color:#3a3a3a;transform:scaleX(0.9225);">Assembly</span>
<span class="t" style="left:270px;top:66px;font-size:8px;color:#3a3a3a;transform:scaleX(0.9390);">Constraints</span>
<span class="t" style="left:312px;top:56px;font-size:8px;color:#3a3a3a;transform:scaleX(0.9353);">Arrangements</span>
<span class="t" style="left:367px;top:56px;font-size:8px;color:#3a3a3a;transform:scaleX(0.9871);">More</span>
<span class="t" style="left:406px;top:36px;font-size:8px;color:#3a3a3a;transform:scaleX(0.9369);">Pattern Component</span>
<span class="t" style="left:406px;top:50px;font-size:8px;color:#3a3a3a;transform:scaleX(0.9417);">Mirror Assembly</span>
<span class="t" style="left:406px;top:64px;font-size:8px;color:#3a3a3a;transform:scaleX(0.9334);">Make Unique</span>
<span class="t" style="left:479px;top:56px;font-size:8px;color:#3a3a3a;transform:scaleX(0.9871);">More</span>
<span class="t" style="left:507px;top:56px;font-size:8px;color:#3a3a3a;transform:scaleX(0.8938);">Reference</span>
<span class="t" style="left:515px;top:66px;font-size:8px;color:#3a3a3a;transform:scaleX(0.9366);">Sets</span>
<span class="t" style="left:543px;top:56px;font-size:8px;color:#3a3a3a;transform:scaleX(0.8493);">Show</span>
<span class="t" style="left:544px;top:66px;font-size:8px;color:#3a3a3a;transform:scaleX(0.9117);">Only</span>
<span class="t" style="left:568px;top:56px;font-size:8px;color:#3a3a3a;transform:scaleX(1.0420);">More</span>
<span class="t" style="left:597px;top:56px;font-size:8px;color:#3a3a3a;transform:scaleX(0.8998);">WAVE Geometry</span>
<span class="t" style="left:613px;top:66px;font-size:8px;color:#3a3a3a;transform:scaleX(1.0093);">Linker</span>
<span class="t" style="left:667px;top:36px;font-size:8px;color:#3a3a3a;transform:scaleX(0.9253);">Associativity Manager</span>
<span class="t" style="left:667px;top:50px;font-size:8px;color:#3a3a3a;transform:scaleX(0.8996);">WAVE Interface Linker</span>
<span class="t" style="left:667px;top:64px;font-size:8px;color:#3a3a3a;transform:scaleX(0.9313);">Interface</span>
<span class="t" style="left:746px;top:56px;font-size:8px;color:#3a3a3a;transform:scaleX(0.9871);">More</span>
<span class="t" style="left:776px;top:56px;font-size:8px;color:#3a3a3a;transform:scaleX(0.9637);">Simplify</span>
<span class="t" style="left:774px;top:66px;font-size:8px;color:#3a3a3a;transform:scaleX(0.9225);">Assembly</span>
<span class="t" style="left:828px;top:36px;font-size:8px;color:#3a3a3a;transform:scaleX(0.8930);">New Set</span>
<span class="t" style="left:828px;top:50px;font-size:8px;color:#3a3a3a;transform:scaleX(0.8995);">Perform Analysis</span>
<span class="t" style="left:828px;top:64px;font-size:8px;color:#3a3a3a;transform:scaleX(0.8819);">Clearance Browser</span>
<span class="t" style="left:895px;top:56px;font-size:8px;color:#3a3a3a;transform:scaleX(1.0420);">More</span>
<span class="t" style="left:924px;top:56px;font-size:8px;color:#3a3a3a;transform:scaleX(0.8788);">Explosions</span>
<span class="t" style="left:970px;top:56px;font-size:8px;color:#3a3a3a;transform:scaleX(0.8881);">Sequence</span>
<span class="t" style="left:97px;top:78px;font-size:7.5px;color:#2a7fa3;transform:scaleX(0.8183);">Base</span>
<span class="t" style="left:286px;top:78px;font-size:7.5px;color:#2a7fa3;transform:scaleX(1.0117);">Position</span>
<span class="t" style="left:419px;top:78px;font-size:7.5px;color:#2a7fa3;transform:scaleX(1.0314);">Component</span>
<span class="t" style="left:527px;top:78px;font-size:7.5px;color:#2a7fa3;transform:scaleX(1.0054);">Context</span>
<span class="t" style="left:650px;top:78px;font-size:7.5px;color:#2a7fa3;transform:scaleX(1.0099);">Interpart Links</span>
<span class="t" style="left:771px;top:78px;font-size:7.5px;color:#2a7fa3;transform:scaleX(0.9899);">Simplify</span>
<span class="t" style="left:843px;top:78px;font-size:7.5px;color:#2a7fa3;transform:scaleX(0.9945);">Clearance</span>
<span class="t" style="left:918px;top:78px;font-size:7.5px;color:#2a7fa3;transform:scaleX(0.9371);">Explosions</span>
<span class="t" style="left:964px;top:78px;font-size:7.5px;color:#2a7fa3;transform:scaleX(0.9177);">Sequence</span>
<span class="t" style="left:6.9px;top:93px;font-size:8px;color:#222;transform:scaleX(0.8928);">No Selection Filter</span>
<span class="t" style="left:117.3px;top:93px;font-size:8px;color:#222;transform:scaleX(0.8926);">Entire Assembly</span>
<span class="t" style="left:20.6px;top:110px;font-size:8px;color:#222;transform:scaleX(0.9904);">Part Navigator</span>
<span class="t" style="left:226.4px;top:108px;font-size:8.5px;color:#fff;transform:scaleX(0.8979);">3-007-000406_A.prt</span>
<span class="t" style="left:329.5px;top:108px;font-size:8.5px;color:#333;transform:scaleX(0.9150);">3-007-000176_A.prt</span>
<span class="t" style="left:433.4px;top:108px;font-size:8.5px;color:#333;transform:scaleX(0.9016);">New Part.prt</span>
<span class="t" style="left:34.2px;top:535px;font-size:9px;color:#1f6d92;transform:scaleX(0.9740);">Details</span>
<span class="t" style="left:34.2px;top:550px;font-size:9px;color:#1f6d92;transform:scaleX(0.9745);">Preview</span>
<span class="t" style="left:0px;top:568px;font-size:7.5px;color:#111;font-weight:700;transform:scaleX(1.0019);">Select part to browse</span>
<span class="t" style="left:953px;top:568px;font-size:8px;color:#444;transform:scaleX(0.9297);">1 Notification</span>
<span class="t" style="left:35px;top:124px;font-size:9px;color:#fff;transform:scaleX(1.0449);">Interpart Link Browser</span>
<span class="t" style="left:346.6px;top:124px;font-size:8.5px;color:#fff;font-weight:700;">?</span>
<span class="t" style="left:35.8px;top:141px;font-size:9px;color:#1f6d92;transform:scaleX(1.0552);">Links to Investigate</span>
<span class="t" style="left:35.8px;top:180px;font-size:9px;color:#1f6d92;transform:scaleX(1.0556);">Interpart Links</span>
<span class="t" style="left:37.3px;top:159px;font-size:8px;color:#222;transform:scaleX(0.9843);">Objects</span>
<span class="t" style="left:84px;top:159px;font-size:8px;color:#222;transform:scaleX(0.9247);">Features</span>
<span class="t" style="left:130px;top:159px;font-size:8px;color:#222;transform:scaleX(0.9372);">Parts</span>
<span class="t" style="left:30.4px;top:199px;font-size:8px;color:#222;transform:scaleX(0.9520);">Part Name</span>
<span class="t" style="left:171px;top:199px;font-size:8px;color:#222;transform:scaleX(0.9601);">Load Status</span>
<span class="t" style="left:224px;top:199px;font-size:8px;color:#222;transform:scaleX(0.9446);">Link Types</span>
<span class="t" style="left:37px;top:211px;font-size:8px;color:#111;transform:scaleX(0.9835);">3-007-000176_A.prt</span>
<span class="t" style="left:170px;top:211px;font-size:8px;color:#111;transform:scaleX(0.9823);">Fully Loaded</span>
<span class="t" style="left:48px;top:224px;font-size:8px;color:#8bbdd3;transform:scaleX(0.9670);">New Part.prt</span>
<span class="t" style="left:170px;top:224px;font-size:8px;color:#a9c9d6;transform:scaleX(0.9823);">Fully Loaded</span>
<span class="t" style="left:224px;top:224px;font-size:8px;color:#8bbdd3;transform:scaleX(0.9680);">Geometry</span>
<span class="t" style="left:333.75px;top:328px;font-size:8.5px;color:#2a7da4;transform:scaleX(0.8719);">Close</span>
<span class="t" style="left:341px;top:316px;font-size:8.5px;color:#333;transform:scaleX(0.9491);">Open in Window</span>
<span class="t" style="left:1001.6px;top:21px;font-size:6.5px;color:#e6f0f5;font-weight:700;">?</span>
</body></html>
